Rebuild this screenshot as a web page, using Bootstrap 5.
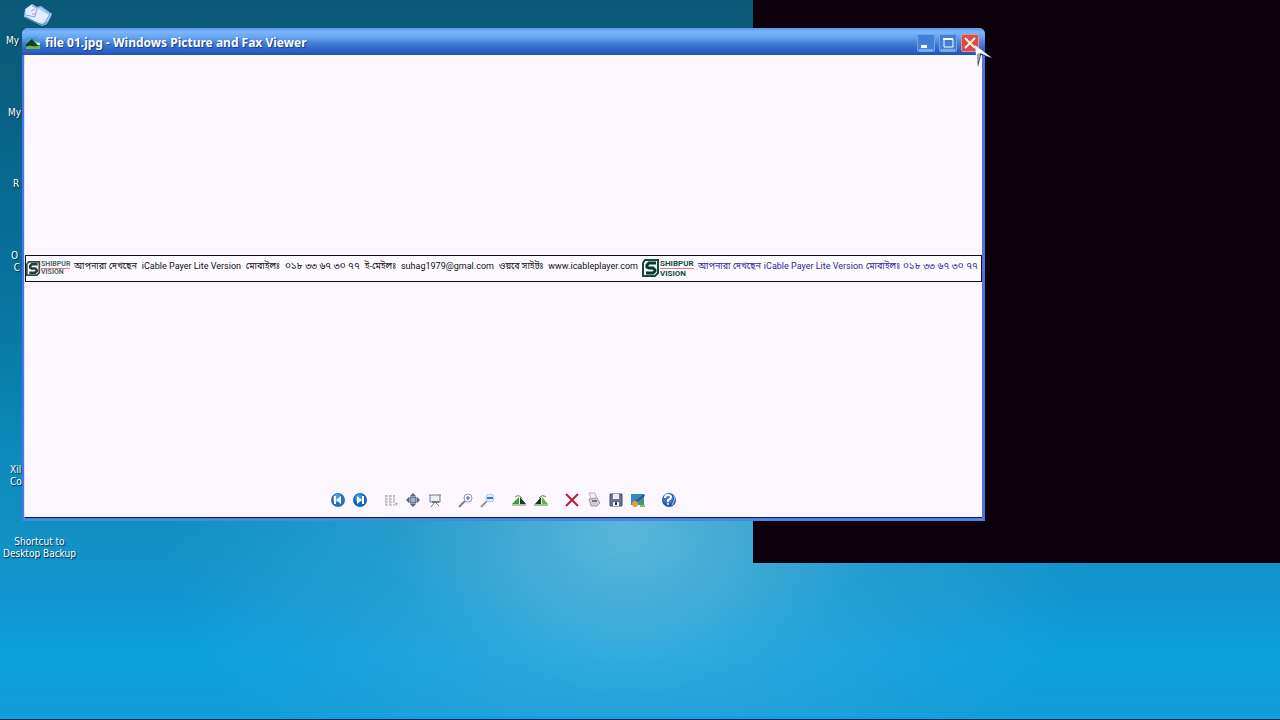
<!DOCTYPE html>
<html lang="en">
<head>
<meta charset="utf-8">
<meta name="viewport" content="width=device-width, initial-scale=1">
<title>file 01.jpg - Windows Picture and Fax Viewer</title>
<link href="https://cdn.jsdelivr.net/npm/bootstrap@5.3.0/dist/css/bootstrap.min.css" rel="stylesheet">
<style>
body { font-family: "DejaVu Sans", sans-serif; background: #0f9ad6; }
.desktop {
  background:
    radial-gradient(ellipse 36% 48% at 49% 74%, rgba(115,195,225,.75), rgba(70,175,220,.38) 50%, rgba(15,155,215,0) 100%),
    linear-gradient(#0a5877 0%, #0a5d7c 10%, #076b93 28%, #0877a2 45%, #0d89ba 62%, #1290c3 74%, #1096cf 83%, #0c9fdd 91%, #109cd8 98%);
}
.desktop-edge { height: 4px; background: linear-gradient(#00a4f0 0 75%, #001820 75%); }
.blank-screen { left: 58.8%; height: 78.2%; background: #0c000d; }
.shortcut { font: 10px/12px "DejaVu Sans Condensed", "DejaVu Sans", sans-serif; color: #fff; text-shadow: 1px 1px 1px #00263c; text-decoration: none; white-space: nowrap; }
.viewer { left: 22px; top: 28px; width: 75.2%; height: 68.5%; background: #fcf7ff; border: 2px solid #4a76e4; border-top: 0; border-bottom: 3px solid #4787dc; border-right-width: 3px; border-radius: 6px 6px 0 0; }
.viewer-body { border-left: 1px solid #d5e4fb; border-bottom: 1px solid #06166e; }
.titlebar { height: 27px; margin: 0 -3px 0 -2px; padding: 4px 6px 0 3px; border-radius: 6px 6px 0 0; border-bottom: 2px solid #2453b8; background: linear-gradient(#5a9ae8 0%, #79b8fb 16%, #65a3ef 38%, #437fd3 62%, #3268c8 82%, #2d59c4 100%); }
.titlebar h1 { font: bold 12px/16px "Noto Sans", sans-serif; color: #fff; text-shadow: 1px 1px 1px #143e8c; padding-left: 4px; }
.win-btn { width: 18px; height: 18px; padding: 0; border: 1px solid #6ea4ea; border-radius: 2px; background: #4280d5; line-height: 0; display: block; }
.win-close { background: #d94b4b; border-color: #e9908f; }
.strip { height: 27px; border: 1px solid #111; background: #fcfaff; font: 9px/20px Roboto, "Noto Sans Bengali", "Noto Sans", sans-serif; color: #111; white-space: nowrap; overflow: hidden; }
.strip-logo { flex: 0 0 48px; }
.strip-logo-large { flex: 0 0 60px; }
.strip-first { flex: 0 1 564px; }
.strip-digits { font-size: 10px; }
.strip-second { flex: 0 1 280px; color: #32289a; }
.brand-name { font: bold 8px/9px Roboto, sans-serif; color: #174a3b; }
.brand-name span + span { border-top: 1px solid #cf8585; }
.brand-small { font-size: 7px; line-height: 7px; color: #51685f; }
.toolbar { height: 36px; gap: 15px; padding-top: 2px; }
.tool { width: 16px; height: 16px; padding: 0; border: 0; background: transparent; line-height: 0; }
.tools-gap { gap: 6px; }
.pointer-mark { left: 974px; top: 44px; }
</style>
</head>
<body>
<main class="desktop position-relative vh-100 overflow-hidden d-flex flex-column justify-content-end">
  <div class="blank-screen position-absolute top-0 end-0"></div>

  <svg class="position-absolute" style="left:22px;top:3px" width="32" height="24" viewBox="0 0 32 24" aria-hidden="true">
    <path d="M3 6 10 1 15 4 19 3 30 11 25 21 20 23 2 14Z" fill="#a9cdf3"/>
    <path d="M4 6 10 2 15 5 27 12 23 19 16 20 4 13Z" fill="#e4ecff"/>
    <path d="m10 3 5 2-2 9-9-2M15 5l4-1 9 7-5 8" stroke="#7ea9df" fill="none"/>
    <path d="m9 8 4-2m-3 5 4 0" stroke="#c985c4"/><path d="m3 14 17 8 6-3" stroke="#527fb7" fill="none"/>
  </svg>
  <a href="#" class="shortcut position-absolute" style="left:6px;top:35px">My</a>
  <a href="#" class="shortcut position-absolute" style="left:8px;top:107px">My</a>
  <a href="#" class="shortcut position-absolute" style="left:13px;top:178px">R</a>
  <a href="#" class="shortcut position-absolute" style="left:11px;top:250px">O<br>&nbsp;C</a>
  <a href="#" class="shortcut position-absolute" style="left:10px;top:464px">Xil<br>Co</a>
  <a href="#" class="shortcut position-absolute text-center" style="left:3px;top:536px">Shortcut to<br>Desktop Backup</a>

  <section class="viewer position-absolute d-flex flex-column">
    <header class="titlebar d-flex align-items-center">
      <svg width="16" height="14" viewBox="0 0 16 14" aria-hidden="true"><path d="M2 1h9l4 3v9H1V3Z" fill="#4e9bd5"/><path d="m1 8 6-5 3 4 5 2v4H1Z" fill="#123d20"/><path d="M1 11c4-3 8 1 14-2v4H1Z" fill="#64ba42"/><path d="m11 6 4 1v2h-3Z" fill="#ddf6d4"/></svg>
      <h1 class="m-0 flex-grow-1">file 01.jpg - Windows Picture and Fax Viewer</h1>
      <div class="d-flex gap-1">
        <button class="win-btn" aria-label="Minimize"><svg width="16" height="16"><path d="M3 10h6v3H3z" fill="#fff"/><path d="M1 15h14" stroke="#b8d8fa"/></svg></button>
        <button class="win-btn" aria-label="Maximize"><svg width="16" height="16"><path d="M4 4h9v8H4z" fill="none" stroke="#fff"/><path d="M3 4h10" stroke="#fff" stroke-width="2"/><path d="M1 15h14" stroke="#b8d8fa"/></svg></button>
        <button class="win-btn win-close" aria-label="Close"><svg width="16" height="16"><path d="m3 3 10 10M13 3 3 13" stroke="#fff5dc" stroke-width="2"/></svg></button>
      </div>
    </header>
    <div class="viewer-body d-flex flex-column flex-grow-1">
      <div class="flex-grow-1 d-flex flex-column justify-content-center">
        <div class="strip d-flex">
          <div class="strip-logo d-flex align-items-center">
            <svg class="flex-shrink-0" width="15" height="17" viewBox="0 0 18 20"><path d="M3 2h13v13l-3 3H1V5Z" fill="#f4f7fa" stroke="#354b45" stroke-width="2"/><path d="M14 5H7L5 7v2l2 1h4l2 2v1l-2 2H4" fill="none" stroke="#273f38" stroke-width="3"/></svg>
            <div class="brand-name brand-small d-flex flex-column"><span>SHIBPUR</span><span>VISION</span></div>
          </div>
          <div class="strip-first d-flex justify-content-between"><span>আপনারা দেখছেন</span><span>iCable Payer Lite Version</span><span>মোবাইলঃ</span><span class="strip-digits">০১৮ ৩৩ ৬৭ ৩০ ৭৭</span><span>ই-মেইলঃ</span><span>suhag1979@gmal.com</span><span>ওয়বে সাইটঃ</span><span>www.icableplayer.com</span></div>
          <div class="strip-logo-large d-flex align-items-center ps-1">
            <svg class="flex-shrink-0" width="18" height="22" viewBox="0 0 18 20"><path d="M3 2h13v13l-3 3H1V5Z" fill="#f4f7fa" stroke="#164b3c" stroke-width="2"/><path d="M14 5H7L5 7v2l2 1h4l2 2v1l-2 2H4" fill="none" stroke="#0b382d" stroke-width="3"/></svg>
            <div class="brand-name d-flex flex-column"><span>SHIBPUR</span><span>VISION</span></div>
          </div>
          <div class="strip-second d-flex justify-content-between"><span>আপনারা দেখছেন</span><span>iCable Payer Lite Version</span><span>মোবাইলঃ</span><span class="strip-digits">০১৮ ৩৩ ৬৭ ৩০ ৭৭</span></div>
        </div>
      </div>
      <div class="toolbar d-flex justify-content-center align-items-center">
        <div class="d-flex tools-gap">
          <button class="tool" aria-label="Previous"><svg width="16" height="16"><circle cx="8" cy="8" r="7" fill="#2472bd"/><circle cx="7" cy="6" r="4" fill="#45a0e6"/><path d="M5 4v8" stroke="#fff" stroke-width="2"/><path d="m11 4-5 4 5 4Z" fill="#fff"/></svg></button>
          <button class="tool" aria-label="Next"><svg width="16" height="16"><circle cx="8" cy="8" r="7" fill="#1765b5"/><circle cx="7" cy="6" r="4" fill="#3b96df"/><path d="M11 4v8" stroke="#fff" stroke-width="2"/><path d="m5 4 5 4-5 4Z" fill="#fff"/></svg></button>
        </div>
        <div class="d-flex tools-gap">
          <button class="tool" aria-label="Best fit"><svg width="16" height="16"><path d="M2 4h10M2 7h10M2 10h10M2 13h10M3 3v10M7 3v10M11 3v8" stroke="#aaa9b5" stroke-dasharray="3 1"/><path d="M12 11h3l-2 3Z" fill="#aaa9b5"/></svg></button>
          <button class="tool" aria-label="Actual size"><svg width="16" height="16"><path d="M5 5h6v6H5z" fill="#a1afc1" stroke="#40546f"/><path d="m8 1 3 3H5ZM8 15l3-3H5ZM1 8l3-3v6ZM15 8l-3-3v6Z" fill="#4f6688"/></svg></button>
          <button class="tool" aria-label="Slide show"><svg width="16" height="16"><path d="M2 3h12M3 3v7h10V3" fill="#e9edf7" stroke="#72798b"/><path d="m8 10-4 5M8 10l4 4" stroke="#72798b"/><path d="M5 10h7" stroke="#777" stroke-width="2"/></svg></button>
        </div>
        <div class="d-flex tools-gap">
          <button class="tool" aria-label="Zoom in"><svg width="16" height="16"><path d="m1 15 6-6" stroke="#8a7880" stroke-width="2"/><circle cx="10" cy="6" r="4" fill="#eef4ff" stroke="#9899aa"/><path d="M8 6h4M10 4v4" stroke="#5c6580"/></svg></button>
          <button class="tool" aria-label="Zoom out"><svg width="16" height="16"><path d="m1 15 6-6" stroke="#9b918f" stroke-width="2"/><circle cx="10" cy="6" r="4" fill="#d9efff" stroke="#a3cfef"/><path d="M7 6h6" stroke="#2e79c3" stroke-width="2"/></svg></button>
        </div>
        <div class="d-flex tools-gap">
          <button class="tool" aria-label="Rotate clockwise"><svg width="16" height="16"><path d="M1 12 8 5v7Z" fill="#45933b"/><path d="M9 12V5l6 7Z" fill="#163b24"/><path d="M4 5q4-3 7 1M1 13h14" fill="none" stroke="#5f9c45"/></svg></button>
          <button class="tool" aria-label="Rotate counterclockwise"><svg width="16" height="16"><path d="M2 12 8 5v7Z" fill="#183822"/><path d="M9 12V5l6 7Z" fill="#69b63c"/><path d="M13 5q-4-3-7 1M1 13h14" fill="none" stroke="#4b813b"/></svg></button>
        </div>
        <div class="d-flex tools-gap">
          <button class="tool" aria-label="Delete"><svg width="16" height="16"><path d="m2 2 12 12M14 2 2 14" stroke="#b81e38" stroke-width="2"/></svg></button>
          <button class="tool" aria-label="Print"><svg width="16" height="16"><path d="M3 1h6l2 6H5Z" fill="#eee" stroke="#bbb"/><path d="m3 7 8-1 3 5-3 3H5Z" fill="#d0cfd6" stroke="#9c9ca8"/><path d="m6 9 5 0" stroke="#777" stroke-width="2"/></svg></button>
          <button class="tool" aria-label="Copy to"><svg width="16" height="16"><path d="M2 2h12v12H2Z" fill="#68768b" stroke="#444f66"/><path d="M5 2h6v5H5ZM5 10h6v4H5Z" fill="#e8edf7"/><path d="M8 10v3" stroke="#28344b" stroke-width="2"/></svg></button>
          <button class="tool" aria-label="Edit"><svg width="16" height="16"><path d="M1 2h13v11H1Z" fill="#3b88c9"/><path d="m2 12 4-5 3 4 2-3 3 5Z" fill="#4d9c50"/><path d="m5 9 9-7 1 2-9 7Z" fill="#285f91"/><circle cx="5" cy="12" r="3" fill="#e2a03b"/><path d="M10 14h5" stroke="#92c94b" stroke-width="2"/></svg></button>
        </div>
        <button class="tool" aria-label="Help"><svg width="16" height="16"><circle cx="8" cy="8" r="7" fill="#2756a7"/><circle cx="7" cy="7" r="5" fill="#3978cf"/><path d="M13 3q2 5-2 10" fill="none" stroke="#b8d3f5"/><path d="M4 6q0-3 3-3t3 2q0 2-3 3v2" fill="none" stroke="#fff" stroke-width="2"/><circle cx="7" cy="12" r="1" fill="#fff"/></svg></button>
      </div>
    </div>
  </section>
  <svg class="pointer-mark position-absolute" width="20" height="26" viewBox="0 0 20 26" aria-hidden="true"><path d="M1 1 17 14 7 11 4 23Z" fill="#294675"/><path d="M1 1 18 14 6 9 3 22Z" fill="#fff"/><path d="m5 9 1 3-3 10 0-12Z" fill="#99a3b5"/></svg>
  <div class="desktop-edge"></div>
</main>
<script src="https://cdn.jsdelivr.net/npm/bootstrap@5.3.0/dist/js/bootstrap.bundle.min.js"></script>
</body>
</html>
